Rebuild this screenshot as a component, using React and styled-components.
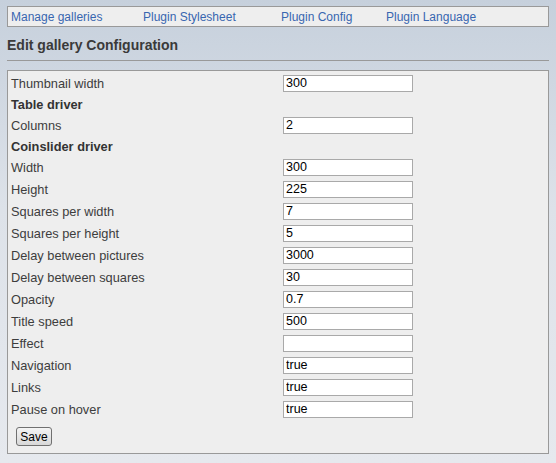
import styled, { createGlobalStyle } from 'styled-components'

const GlobalStyle = createGlobalStyle`
html, body {
    margin: 0;
    padding: 0;
}
body {
    min-height: 463px;
    background: linear-gradient(to bottom, #c6d0dc 0%, #dde2e9 45%, #e6e9ee 100%);
    font-family: 'Liberation Sans', Arial, sans-serif;
    font-size: 12.5px;
    color: #333;
}
`

const Page = styled.div`
padding: 6px 7px 8px 7px;
`

const NavBar = styled.div`
display: flex;
align-items: center;
height: 19px;
padding-left: 3px;
background-color: #eeeeee;
border: 1px solid #999;
`

const NavLink = styled.a`
width: ${props => props.$width}px;
color: #3866b0;
font-size: 12px;
text-decoration: none;
white-space: nowrap;
`

const Title = styled.h2`
margin: 0;
padding: 10px 0 6px 0;
font-size: 14px;
font-weight: bold;
color: #3a3a3a;
line-height: 17px;
border-bottom: 1px solid #999;
`

const FormBox = styled.form`
margin-top: 9px;
padding: 1px 0 7px 3px;
background-color: #eeeeee;
border: 1px solid #999;
`

const Row = styled.div`
display: grid;
grid-template-columns: 272px 130px;
align-items: center;
height: ${props => (props.$heading ? 20 : 22)}px;
`

const Label = styled.span`
color: #3d3d3d;
font-size: 12.8px;
`

const Heading = styled.span`
font-weight: bold;
font-size: 12.8px;
color: #333;
`

const Field = styled.input`
box-sizing: border-box;
width: 130px;
height: 17px;
padding: 0 2px;
border: 1px solid #a9a9a9;
background: #fff;
font-family: 'Liberation Sans', Arial, sans-serif;
font-size: 12.5px;
color: #000;
outline: none;
`

const SaveButton = styled.button`
margin: 7px 0 0 5px;
height: 19px;
width: 36px;
padding: 0;
font-family: 'Liberation Sans', Arial, sans-serif;
font-size: 12px;
color: #000;
border: 1px solid #707070;
border-radius: 3px;
background: linear-gradient(to bottom, #f4f4f4 0%, #e6e6e6 50%, #d8d8d8 100%);
`

const links = [
    { text: 'Manage galleries', width: 132 },
    { text: 'Plugin Stylesheet', width: 138 },
    { text: 'Plugin Config', width: 105 },
    { text: 'Plugin Language', width: 100 },
]

const rows = [
    { label: 'Thumbnail width', value: '300' },
    { heading: 'Table driver' },
    { label: 'Columns', value: '2' },
    { heading: 'Coinslider driver' },
    { label: 'Width', value: '300' },
    { label: 'Height', value: '225' },
    { label: 'Squares per width', value: '7' },
    { label: 'Squares per height', value: '5' },
    { label: 'Delay between pictures', value: '3000' },
    { label: 'Delay between squares', value: '30' },
    { label: 'Opacity', value: '0.7' },
    { label: 'Title speed', value: '500' },
    { label: 'Effect', value: '' },
    { label: 'Navigation', value: 'true' },
    { label: 'Links', value: 'true' },
    { label: 'Pause on hover', value: 'true' },
]

function App() {
    return (
        <>
            <GlobalStyle />
            <Page>
                <NavBar>
                    {links.map((link) => (
                        <NavLink key={link.text} href="#" $width={link.width}>
                            {link.text}
                        </NavLink>
                    ))}
                </NavBar>
                <Title>Edit gallery Configuration</Title>
                <FormBox onSubmit={(e) => e.preventDefault()}>
                    {rows.map((row) =>
                        row.heading ? (
                            <Row key={row.heading} $heading>
                                <Heading>{row.heading}</Heading>
                            </Row>
                        ) : (
                            <Row key={row.label}>
                                <Label>{row.label}</Label>
                                <Field type="text" defaultValue={row.value} />
                            </Row>
                        )
                    )}
                    <SaveButton type="submit">Save</SaveButton>
                </FormBox>
            </Page>
        </>
    )
}

export default App
